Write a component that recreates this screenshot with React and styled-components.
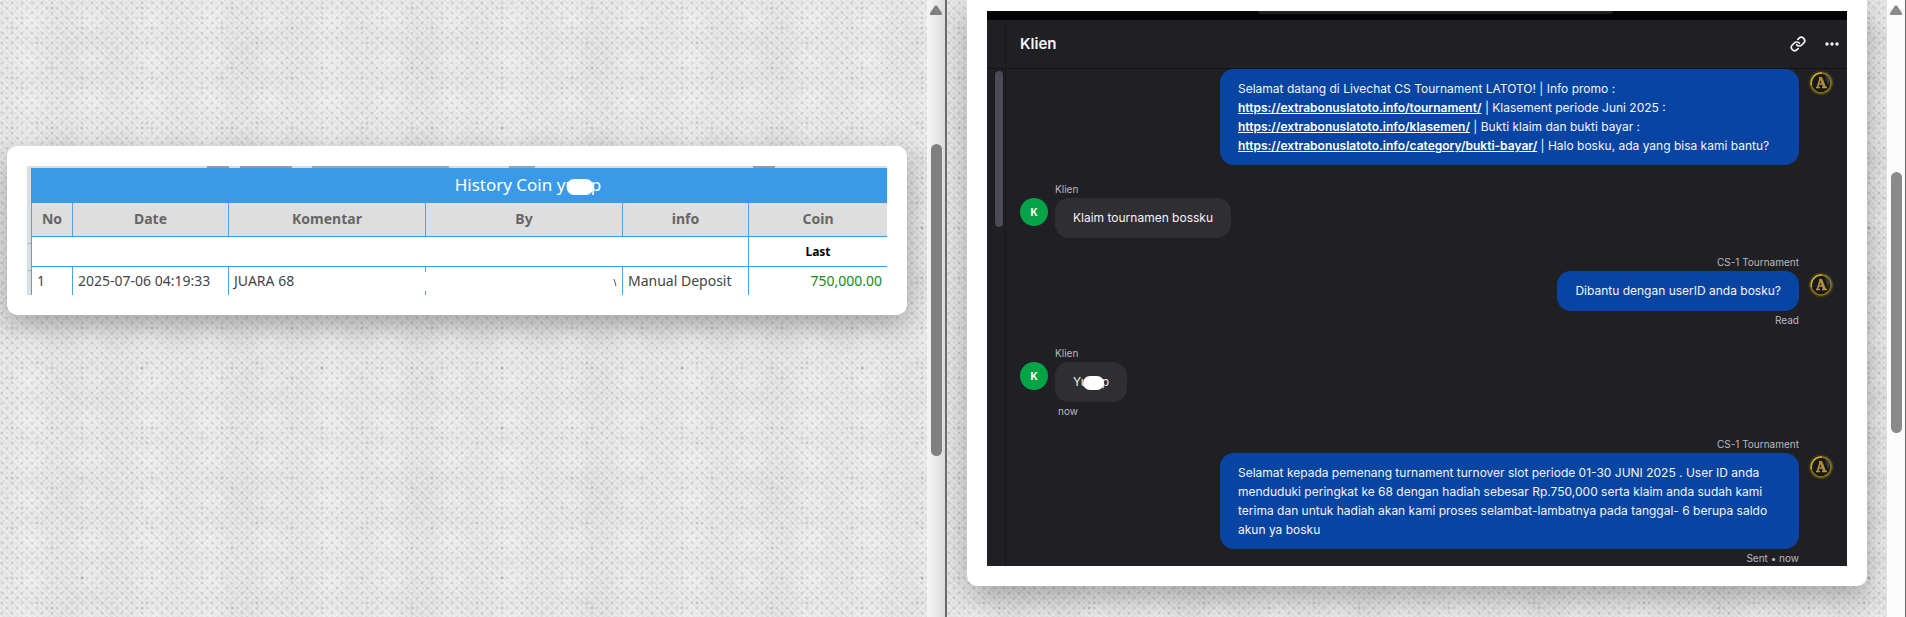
import styled, { createGlobalStyle } from "styled-components";

const GlobalStyle = createGlobalStyle`
  * {
    box-sizing: border-box;
  }
  body {
    margin: 0;
    background: #e4e4e4;
  }
`;

const Page = styled.main`
  display: grid;
  grid-template-columns: 947fr 959fr;
  min-height: 100vh;
`;

// woven paper background: a fine 10px weave, darker specks and soft patches
const Pane = styled.section`
  display: flex;
  min-width: 0;
  border-right: ${(props) => props.edge}px solid #6b6b6b;
  background-color: #e0e0e0;
  background-image: radial-gradient(circle at 12px 28px, rgba(80, 80, 80, 0.35) 0, transparent 2px),
    radial-gradient(circle at 52px 8px, rgba(80, 80, 80, 0.35) 0, transparent 2px),
    radial-gradient(circle at 37px 43px, rgba(80, 80, 80, 0.32) 0, transparent 2px),
    radial-gradient(circle at 22px 18px, rgba(80, 80, 80, 0.3) 0, transparent 2px),
    radial-gradient(circle at 2px 3px, rgba(90, 90, 90, 0.26) 0, transparent 2px),
    radial-gradient(circle at 7px 8px, rgba(90, 90, 90, 0.26) 0, transparent 2px),
    repeating-linear-gradient(45deg, rgba(255, 255, 255, 0.25) 0 2px, transparent 2px 4px),
    repeating-linear-gradient(135deg, rgba(255, 255, 255, 0.2) 0 2px, transparent 2px 4px),
    radial-gradient(circle, rgba(255, 255, 255, 0.3), transparent 60%),
    radial-gradient(circle, rgba(110, 110, 110, 0.06), transparent 60%);
  background-size: 70px 50px, 90px 60px, 110px 80px, 60px 70px, 10px 10px,
    10px 10px, auto, auto, 60px 40px, 170px 110px;
`;

const Content = styled.div`
  flex: 1;
  min-width: 0;
  overflow: hidden;
  padding: ${(props) => props.pad};
`;

const Card = styled.article`
  background: #fff;
  padding: ${(props) => (props.cut ? "11px 20px 20px" : "20px")};
  border-radius: ${(props) => (props.cut ? "0 0 10px 10px" : "10px")};
  box-shadow: 0 10px 30px rgba(0, 0, 0, 0.3);
`;

const Track = styled.div`
  flex: none;
  display: flex;
  flex-direction: column;
  align-items: center;
  width: 18px;
  padding-top: 5px;
  background: ${(props) =>
    props.shaded ? "linear-gradient(90deg, #f6f6f6, #dcdcdc)" : "#fcfcfc"};
`;

const Arrow = styled.svg`
  flex: none;
  width: 12px;
  height: 10px;
`;

const Thumb = styled.div`
  width: 11px;
  height: ${(props) => props.size}px;
  margin-top: ${(props) => props.offset}px;
  border-radius: 6px;
  background: ${(props) => props.tone};
`;

const TableShot = styled.div`
  padding: 2px 0 0 4px;
  background: linear-gradient(#8f9ba8, #8f9ba8) 180px 0 / 22px 2px no-repeat,
    linear-gradient(#8f9ba8, #8f9ba8) 213px 0 / 52px 2px no-repeat,
    linear-gradient(#8fa5ba, #8fa5ba) 285px 0 / 137px 2px no-repeat,
    linear-gradient(#8fa5ba, #8fa5ba) 482px 0 / 26px 2px no-repeat,
    linear-gradient(#8f9ba8, #8f9ba8) 726px 0 / 22px 2px no-repeat,
    linear-gradient(#9aa7b3, #9aa7b3) 1px 77px / 3px 1px no-repeat,
    linear-gradient(#9aa7b3, #9aa7b3) 1px 104px / 3px 1px no-repeat, #dddedb;
`;

const Table = styled.table`
  width: 100%;
  table-layout: fixed;
  border-collapse: separate;
  border-spacing: 0;
  background: #fff;
  color: #444;
  font: 14px/20px "Noto Sans", "Open Sans", sans-serif;
`;

const TitleCell = styled.th`
  height: 35px;
  padding: 0 0 2px 138px;
  background: #3b9ae8;
  color: #fff;
  font-size: 17px;
  font-weight: 400;
`;

const HeadCell = styled.th`
  height: 34px;
  padding: 0 0 2px;
  background: #dedede;
  border-left: 1px solid #4fa3e8;
  border-bottom: 1px solid #3b9ae8;
  color: #666;
  font-weight: 700;
`;

const Cell = styled.td`
  height: ${(props) => (props.sub ? 30 : 28)}px;
  padding: 0 5px;
  border-left: 1px solid #4fa3e8;
  border-bottom: ${(props) => (props.sub ? "1px solid #3b9ae8" : "0")};
  text-align: ${(props) => props.align || "left"};
  color: ${(props) => props.color || "#444"};
  font-weight: ${(props) => (props.sub ? 700 : 400)};
  font-size: ${(props) => (props.sub ? 12 : 14)}px;
  white-space: nowrap;
`;

const HiddenCell = styled(Cell)`
  border-left: 0;
  background: linear-gradient(#4fa3e8, #4fa3e8) 0 0 / 1px 5px no-repeat,
    linear-gradient(#4fa3e8, #4fa3e8) 0 100% / 1px 4px no-repeat;
`;

const Fragment = styled.svg`
  width: 4px;
  height: 7px;
`;

const Mask = styled.span`
  display: inline-block;
  position: relative;
  width: ${(props) => props.w}px;
  height: ${(props) => props.h}px;
  margin: 0 -2px 0 -${(props) => props.over}px;
  border-radius: 7px;
  background: #fff;
  vertical-align: -4px;
`;

const Chat = styled.div`
  display: grid;
  grid-template-columns: 19px 1fr;
  grid-template-rows: 9px 49px 497px;
  overflow: hidden;
  background: #202024;
  color: #f4f4f6;
  font: 12px/19px Inter, sans-serif;
`;

const Browser = styled.div`
  grid-column: 1 / -1;
  display: flex;
  justify-content: center;
  background: #040404;
`;

const AddressBar = styled.div`
  width: 355px;
  height: 3px;
  margin-left: 36px;
  border-radius: 0 0 4px 4px;
  background: #202024;
`;

const Gutter = styled.div`
  border-right: 1px solid #17171a;
  border-bottom: ${(props) => (props.head ? "1px solid #141417" : "0")};
  padding: 2px 0 0 8px;
`;

const GutterThumb = styled.div`
  width: 8px;
  height: 156px;
  border-radius: 4px;
  background: #4b4b55;
  box-shadow: 0 0 0 1px #1a1a1d;
`;

const ChatHeader = styled.header`
  display: flex;
  align-items: center;
  gap: 19px;
  padding: 0 8px 1px 14px;
  border-bottom: 1px solid #141417;
`;

const ChatTitle = styled.h1`
  flex: 1;
  margin: 0;
  font-size: 15px;
  font-weight: 600;
`;

const IconButton = styled.button`
  display: flex;
  padding: 0;
  border: 0;
  background: none;
  color: #f4f4f6;
  cursor: pointer;
`;

const Messages = styled.div`
  display: flex;
  flex-direction: column;
  gap: 15px;
  padding: 0 13px 0 14px;
`;

const Message = styled.div`
  display: grid;
  grid-template-columns: ${(props) => (props.agent ? "1fr 26px" : "28px 1fr")};
  column-gap: ${(props) => (props.agent ? 9 : 7)}px;
  justify-items: ${(props) => (props.agent ? "end" : "start")};
`;

const Meta = styled.span`
  grid-column: ${(props) => (props.agent ? 1 : 2)};
  padding: ${(props) => (props.status && !props.agent ? "0 3px" : "0")};
  color: #b9b9c0;
  font-size: 10px;
  line-height: 18px;
`;

const Bubble = styled.div`
  grid-column: ${(props) => (props.agent ? 1 : 2)};
  width: ${(props) => (props.wide ? "579px" : "auto")};
  max-width: 100%;
  min-height: 40px;
  padding: 10px 18px;
  border-radius: 14px;
  background: ${(props) => (props.agent ? "#0845a3" : "#2e2e33")};
`;

const Link = styled.a`
  color: #fff;
  font-weight: 600;
  text-decoration: underline;
`;

const ClientAvatar = styled.span`
  grid-row: 2;
  display: grid;
  place-items: center;
  width: 28px;
  height: 28px;
  border-radius: 50%;
  background: #04a347;
  color: #fff;
  font-size: 10px;
  font-weight: 700;
`;

const AgentLogo = styled.svg`
  width: 26px;
  height: 28px;
`;

const columns = [
  ["No", 41],
  ["Date", 156],
  ["Komentar", 197],
  ["By", 197],
  ["info", 126],
  ["Coin"],
];

function Scrollbar({ offset, size, tone, shaded }) {
  return (
    <Track shaded={shaded}>
      <Arrow viewBox="0 0 12 10">
        <path d="M5 .7Q6 -.3 7 .7L12 8Q12.5 10 11 10H1Q-.5 10 0 8Z" fill={tone} />
      </Arrow>
      <Thumb offset={offset} size={size} tone={tone} />
    </Track>
  );
}

function Logo() {
  return (
    <AgentLogo viewBox="0 0 26 28">
      <circle cx="13" cy="14" r="12.500" fill="#3a3413" />
      <path d="M17 3A12 12 0 0 1 25 16L22 17L17 6Z" fill="#48463f" />
      <circle cx="13" cy="14" r="10" fill="#19191b" stroke="#8c7620" strokeWidth="1.500" />
      <path d="M3.500 16A10 10 0 0 1 14 4" fill="none" stroke="#c7ab35" strokeWidth="1.500" />
      <path d="M17 6L22 11L20 17Z" fill="#3c3b37" />
      <path d="M8 18.500H12M14 18.500H19M9.500 18L12.500 8M10.500 15H15" fill="none" stroke="#b8943a" strokeWidth="1.500" />
      <path d="M11 8H14L18 18H15Z" fill="#b58f35" />
    </AgentLogo>
  );
}

function ChatMessage({ agent, wide, name, status, children }) {
  return (
    <Message agent={agent}>
      {name && <Meta agent={agent}>{name}</Meta>}
      {!agent && <ClientAvatar>K</ClientAvatar>}
      <Bubble agent={agent} wide={wide}>
        {children}
      </Bubble>
      {agent && <Logo />}
      {status && (
        <Meta agent={agent} status>
          {status}
        </Meta>
      )}
    </Message>
  );
}

function HistoryTable() {
  return (
    <TableShot>
      <Table>
        <colgroup>
          {columns.map(([name, width]) => (
            <col key={name} width={width} />
          ))}
        </colgroup>
        <thead>
          <tr>
            <TitleCell colSpan={6}>
              History Coin yu
              <Mask w={26} h={16} over={9} />p
            </TitleCell>
          </tr>
          <tr>
            {columns.map(([name]) => (
              <HeadCell key={name}>{name}</HeadCell>
            ))}
          </tr>
        </thead>
        <tbody>
          <tr>
            <Cell sub colSpan={5} />
            <Cell sub align="center" color="#000">
              Last
            </Cell>
          </tr>
          <tr>
            <Cell>1</Cell>
            <Cell>2025-07-06 04:19:33</Cell>
            <Cell>JUARA 68</Cell>
            <HiddenCell align="right">
              <Fragment viewBox="0 0 4 7">
                <path d="M1 0L3 7" stroke="#555" />
              </Fragment>
            </HiddenCell>
            <Cell>Manual Deposit</Cell>
            <Cell align="right" color="#168a16">
              750,000.00
            </Cell>
          </tr>
        </tbody>
      </Table>
    </TableShot>
  );
}

function LiveChat() {
  return (
    <Chat>
      <Browser>
        <AddressBar />
      </Browser>
      <Gutter head />
      <ChatHeader>
        <ChatTitle>Klien</ChatTitle>
        <IconButton aria-label="Copy link">
          <svg width="16" height="16" viewBox="0 0 24 24" fill="none" stroke="currentColor" strokeWidth="2.500" strokeLinecap="round">
            <path d="M10 13a5 5 0 0 0 7.540.540l3-3a5 5 0 0 0-7.070-7.070l-1.720 1.710" />
            <path d="M14 11a5 5 0 0 0-7.540-.540l-3 3a5 5 0 0 0 7.070 7.070l1.710-1.710" />
          </svg>
        </IconButton>
        <IconButton aria-label="More options">
          <svg width="14" height="4" viewBox="0 0 14 4" fill="currentColor">
            <circle cx="2" cy="2" r="1.700" />
            <circle cx="7" cy="2" r="1.700" />
            <circle cx="12" cy="2" r="1.700" />
          </svg>
        </IconButton>
      </ChatHeader>
      <Gutter>
        <GutterThumb />
      </Gutter>
      <Messages>
        <ChatMessage agent wide>
          Selamat datang di Livechat CS Tournament LATOTO! | Info promo :<br />
          <Link href="#tournament">https://extrabonuslatoto.info/tournament/</Link> | Klasement periode Juni 2025 :<br />
          <Link href="#klasemen">https://extrabonuslatoto.info/klasemen/</Link> | Bukti klaim dan bukti bayar :<br />
          <Link href="#bukti-bayar">https://extrabonuslatoto.info/category/bukti-bayar/</Link> | Halo bosku, ada yang bisa kami bantu?
        </ChatMessage>
        <ChatMessage name="Klien">Klaim tournamen bossku</ChatMessage>
        <ChatMessage agent name="CS-1 Tournament" status="Read">
          Dibantu dengan userID anda bosku?
        </ChatMessage>
        <ChatMessage name="Klien" status="now">
          Yu
          <Mask w={21} h={14} over={5} />p
        </ChatMessage>
        <ChatMessage agent wide name="CS-1 Tournament" status="Sent • now">
          Selamat kepada pemenang turnament turnover slot periode 01-30 JUNI 2025 . User ID anda
          menduduki peringkat ke 68 dengan hadiah sebesar Rp.750,000 serta klaim anda sudah kami
          terima dan untuk hadiah akan kami proses selambat-lambatnya pada tanggal- 6 berupa saldo
          akun ya bosku
        </ChatMessage>
      </Messages>
    </Chat>
  );
}

export default function App() {
  return (
    <>
      <GlobalStyle />
      <Page>
        <Pane edge={2}>
          <Content pad="146px 20px 20px 7px">
            <Card>
              <HistoryTable />
            </Card>
          </Content>
          <Scrollbar shaded offset={129} size={312} tone="#808080" />
        </Pane>
        <Pane edge={1}>
          <Content pad="0 20px 31px">
            <Card cut>
              <LiveChat />
            </Card>
          </Content>
          <Scrollbar offset={157} size={261} tone="#8a8a8a" />
        </Pane>
      </Page>
    </>
  );
}
